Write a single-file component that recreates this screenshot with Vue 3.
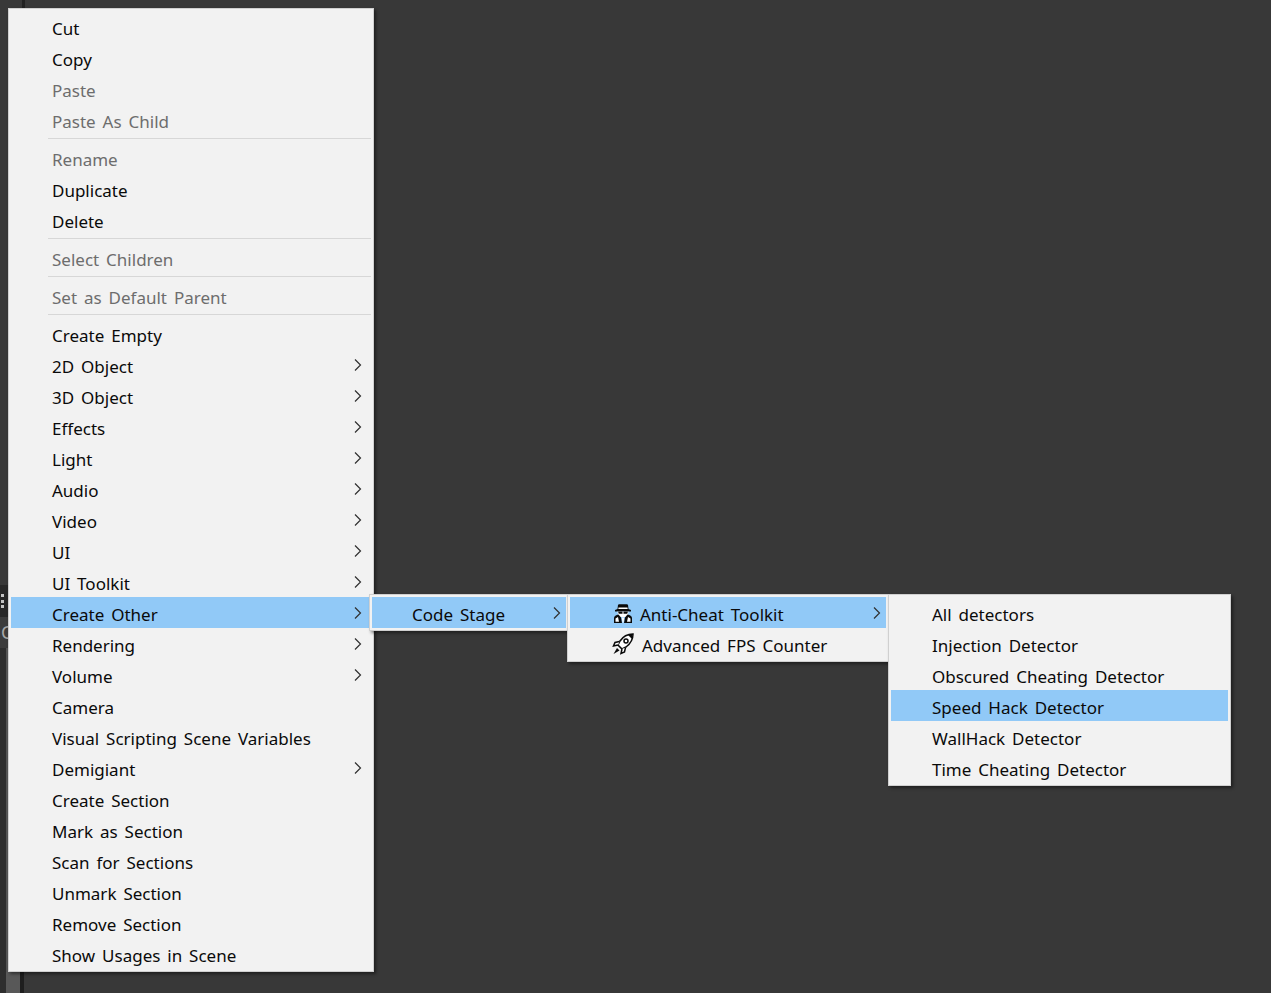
<script setup>
const main = [
  [{ t: 'Cut' }, { t: 'Copy' }, { t: 'Paste', d: 1 }, { t: 'Paste As Child', d: 1 }],
  [{ t: 'Rename', d: 1 }, { t: 'Duplicate' }, { t: 'Delete' }],
  [{ t: 'Select Children', d: 1 }],
  [{ t: 'Set as Default Parent', d: 1 }],
  [
    { t: 'Create Empty' }, { t: '2D Object', a: 1 }, { t: '3D Object', a: 1 }, { t: 'Effects', a: 1 },
    { t: 'Light', a: 1 }, { t: 'Audio', a: 1 }, { t: 'Video', a: 1 }, { t: 'UI', a: 1 },
    { t: 'UI Toolkit', a: 1 }, { t: 'Create Other', a: 1, h: 1 }, { t: 'Rendering', a: 1 },
    { t: 'Volume', a: 1 }, { t: 'Camera' }, { t: 'Visual Scripting Scene Variables' },
    { t: 'Demigiant', a: 1 }, { t: 'Create Section' }, { t: 'Mark as Section' },
    { t: 'Scan for Sections' }, { t: 'Unmark Section' }, { t: 'Remove Section' },
    { t: 'Show Usages in Scene' }
  ]
]
const detectors = [
  { t: 'All detectors' }, { t: 'Injection Detector' }, { t: 'Obscured Cheating Detector' },
  { t: 'Speed Hack Detector', h: 1 }, { t: 'WallHack Detector' }, { t: 'Time Cheating Detector' }
]
</script>

<template>
  <div class="desk">
    <div class="edge edge-top"></div>
    <div class="edge edge-bottom"></div>
    <div class="edge edge-tab"></div>
    <div class="edge edge-tab2"></div>
    <div class="edge edge-low"></div>
    <div class="grip"><i></i><i></i><i></i></div>
    <div class="edge-letter">C</div>

    <div class="menu m1">
      <template v-for="(g, gi) in main" :key="gi">
        <div v-if="gi" class="sep"></div>
        <div v-for="it in g" :key="it.t" class="row" :class="{ dis: it.d, hi: it.h }">
          <span class="label">{{ it.t }}</span>
          <svg v-if="it.a" class="arrow" width="8" height="14" viewBox="0 0 8 14"><path d="M1 1.5 L6.5 7 L1 12.5" /></svg>
        </div>
      </template>
    </div>

    <div class="menu m2">
      <div class="row hi">
        <span class="label">Code Stage</span>
        <svg class="arrow" width="8" height="14" viewBox="0 0 8 14"><path d="M1 1.5 L6.5 7 L1 12.5" /></svg>
      </div>
    </div>

    <div class="menu m3">
      <div class="row hi">
        <svg class="ico" width="20" height="20" viewBox="0 0 20 20">
          <path class="blk" d="M5 2 C5 0.800 7 1.200 10 1.200 C13 1.200 15 0.800 15 2 L15.500 6 L18 7 L18 8.500 L2 8.500 L2 7 L4.500 6 Z" />
          <path class="wht" d="M5.500 4.500 L14.500 4.500 L14.700 6 L5.300 6 Z" />
          <path class="wht" d="M4.500 8.500 L15.500 8.500 L15 11.500 L12.500 14 L7.500 14 L5 11.500 Z" />
          <path class="blk" d="M5 8.500 L9.500 8.500 L9.500 10.800 L5.800 10.800 Z M10.500 8.500 L15 8.500 L14.200 10.800 L10.500 10.800 Z" />
          <path class="blk" d="M1 20 L1 15 C1 13 3 12 5.500 11.500 L8 14.500 L9 20 Z M19 20 L19 15 C19 13 17 12 14.500 11.500 L12 14.500 L11 20 Z" />
          <path class="wht" d="M2.500 18.800 L2.500 15.500 L5 14 L6 18.800 Z M17.500 18.800 L17.500 15.500 L15 14 L14 18.800 Z M8.800 14.500 L11.200 14.500 L10.500 19.500 L9.500 19.500 Z" />
        </svg>
        <span class="label lb1">Anti-Cheat Toolkit</span>
        <svg class="arrow" width="8" height="14" viewBox="0 0 8 14"><path d="M1 1.5 L6.5 7 L1 12.5" /></svg>
      </div>
      <div class="row rocket-row">
        <svg class="ico" width="22" height="22" viewBox="0 0 22 22">
          <path class="line" d="M21 1 C15 1 11 3.500 8 8 L6 12 L10 16 L14 14 C18 11 21 7 21 1 Z" />
          <circle class="line" cx="14" cy="8" r="2" />
          <path class="line" d="M7.500 8.500 L3 9.500 L1.500 13 L6 12 M13.500 14.500 L12.500 19 L9 20.500 L10 16" />
          <path class="blk" d="M5 15 L7.500 17.500 L1.500 21 Z" />
          <path class="blk" d="M16 2 L20 2 L20 6 Z" />
        </svg>
        <span class="label lb2">Advanced FPS Counter</span>
      </div>
    </div>

    <div class="menu m4">
      <div v-for="it in detectors" :key="it.t" class="row" :class="{ hi: it.h }">
        <span class="label">{{ it.t }}</span>
      </div>
    </div>
  </div>
</template>

<style>
html, body { margin: 0; background: #383838; }
</style>

<style scoped>
.desk {
  position: relative;
  width: 1271px;
  height: 993px;
  overflow: hidden;
  background: #383838;
  font-family: "Noto Sans", "Noto Sans CJK KR", sans-serif;
  font-size: 17px;
  color: #0a0a0a;
}
.edge { position: absolute; }
.edge-top { left: 22px; top: 0; width: 3px; height: 8px; background: #222; }
.edge-bottom { left: 0; top: 972px; width: 25px; height: 21px; background: linear-gradient(90deg, #2e2e2e 0 6px, #585858 6px 20px, #1e1e1e 20px 24px, #383838 24px); }
.edge-tab { left: 0; top: 585px; width: 8px; height: 32px; background: #282828; }
.edge-tab2 { left: 0; top: 617px; width: 8px; height: 31px; background: #3c3c3c; }
.edge-low { left: 0; top: 648px; width: 8px; height: 324px; background: linear-gradient(90deg, #2e2e2e 0 6px, #555 6px); }
.grip { position: absolute; left: 1px; top: 594px; display: flex; flex-direction: column; gap: 2.5px; }
.grip i { display: block; width: 3px; height: 3px; background: #c4c4c4; }
.edge-letter { position: absolute; left: 1px; top: 620px; font-size: 18px; color: #a8a8a8; }

.menu {
  position: absolute;
  box-sizing: border-box;
  padding: 2px;
  background: #f2f2f2;
  border: 1px solid #d0d0d0;
  box-shadow: 2px 2px 3px rgba(0, 0, 0, .45);
}
.m1 { left: 8px; top: 8px; width: 366px; height: 964px; }
.m2 { left: 369px; top: 594px; width: 200px; height: 37px; }
.m3 { left: 567px; top: 594px; width: 322px; height: 68px; }
.m4 { left: 888px; top: 594px; width: 343px; height: 192px; }

.row {
  position: relative;
  display: flex;
  align-items: center;
  height: 31px;
  padding-left: 41px;
  white-space: nowrap;
  padding-top: 3px;
  box-sizing: border-box;
}
.m2 .row { padding-left: 40px; }
.m3 .row { padding-left: 43px; }
.m3 .rocket-row { padding-left: 42px; }
.dis { color: #6d6d6d; }
.hi { background: #91c9f7; }
.sep { height: 1px; margin: 3px 0 3px 37px; background: #d7d7d7; }
.label { word-spacing: 2.5px; }
.lb1 { margin-left: 7px; }
.lb2 { margin-left: 8px; }
.arrow { position: absolute; right: 9px; top: 9px; fill: none; stroke: #303030; stroke-width: 1.2; }
.m2 .arrow, .m3 .arrow { right: 5px; }
.ico { flex: none; margin-top: -3px; }
.blk { fill: #0a0a0a; }
.wht { fill: #fff; }
.line { fill: #fff; stroke: #0a0a0a; stroke-width: 1.500; }
</style>
